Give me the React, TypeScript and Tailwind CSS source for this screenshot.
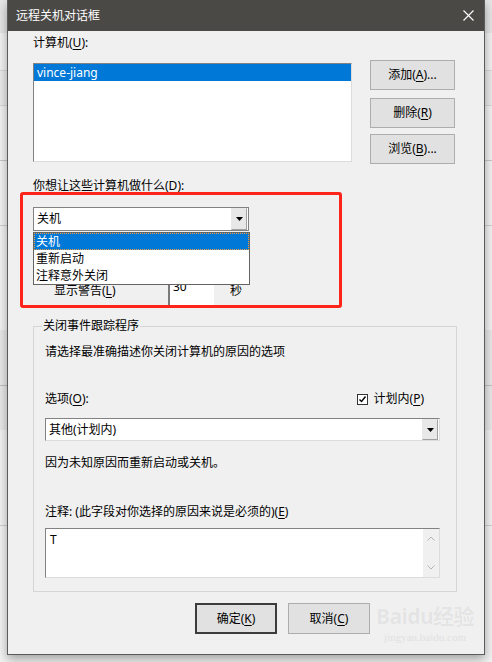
import React from "react";

const font = "font-['Noto_Sans','Noto_Sans_CJK_SC',sans-serif]";

const Btn = ({ label, def, className = "" }: { label: React.ReactNode; def?: boolean; className?: string }) => (
    <button
        className={
            "flex items-center justify-center bg-[#e1e1e1] text-[12px] text-black " +
            (def ? "border-2 border-[#3c3c3c] " : "border border-[#adadad] ") +
            className
        }
    >
        {label}
    </button>
);

const Arrow = () => (
    <div className="flex h-full w-[16px] items-center justify-center border border-[#a0a0a0] border-l-[#e8e8e8] border-t-[#e8e8e8] bg-[#e8e8e8]">
        <svg width="7" height="4" viewBox="0 0 7 4">
            <path d="M0 0H7L3.5 4Z" fill="#000" />
        </svg>
    </div>
);

const U = ({ c }: { c: string }) => <span className="underline underline-offset-2">{c}</span>;

export default function App() {
    return (
        <div className={"relative h-[662px] w-[492px] overflow-hidden bg-[#f3f3f3] " + font}>
            {/* background window bits */}
            <div className="absolute left-0 top-0 h-[33px] w-full bg-[#e6e6e6]" />
            <div className="absolute left-0 top-[70px] h-[36px] w-full border-y border-[#d8d8d8] bg-[#ebebeb]" />
            <div className="absolute left-0 top-[160px] h-px w-full bg-[#c8c8c8]" />
            <div className="absolute left-0 top-[225px] h-px w-full bg-[#d0d0d0]" />
            <div className="absolute left-0 top-[330px] h-[100px] w-full bg-[#e9e9e9]" />
            <div className="absolute left-0 top-[385px] h-px w-full bg-[#c0c0c0]" />
            <div className="absolute left-0 top-[525px] h-px w-full bg-[#d0d0d0]" />

            {/* dialog window */}
            <div className="absolute left-[7px] top-0 flex h-[655px] w-[478px] flex-col border border-t-0 border-[#5b5b5b] bg-[#f0f0f0] shadow-[0_4px_10px_rgba(0,0,0,0.35)]">
                <div className="flex h-[31px] shrink-0 items-center justify-between bg-[#4b4946] pl-[8px] pr-[10px]">
                    <span className="text-[12px] text-white">远程关机对话框</span>
                    <svg width="11" height="11" viewBox="0 0 11 11">
                        <path d="M0.5 0.5L10.5 10.5M10.5 0.5L0.5 10.5" stroke="#fff" strokeWidth="1.1" />
                    </svg>
                </div>

                <div className="flex flex-col pl-[25px] text-[12px] leading-[16px] text-black">
                    <div className="pt-[4px]">
                        计算机(<U c="U" />):
                    </div>

                    <div className="mt-[9px] flex">
                        <div className="mt-[3px] h-[99px] w-[319px] border border-[#828282] border-b-[#dcdcdc] border-r-[#dcdcdc] bg-white">
                            <div className="flex h-[17px] items-center bg-[#0078d7] pl-[3px] text-[12px] text-white">vince-jiang</div>
                        </div>
                        <div className="ml-[18px] flex flex-col">
                            <Btn label={<>添加(<U c="A" />)...</>} className="h-[30px] w-[85px]" />
                            <Btn label={<>删除(<U c="R" />)</>} className="mt-[8px] h-[30px] w-[85px]" />
                            <Btn label={<>浏览(<U c="B" />)...</>} className="mt-[6px] h-[30px] w-[85px]" />
                        </div>
                    </div>

                    <div className="mt-[14px]">
                        你想让这些计算机做什么(<U c="D" />):
                    </div>

                    <div className="relative mt-[13px] flex h-[24px] w-[216px] items-center border border-[#828282] bg-white pr-[1px]">
                        <span className="flex-1 pl-[3px]">关机</span>
                        <div className="h-[22px]">
                            <Arrow />
                        </div>
                        <div className="absolute left-[-1px] top-[24px] z-10 w-[217px] border border-[#646464] bg-white">
                            <div className="flex h-[17px] items-center border border-dotted border-[#f0a040] bg-[#0078d7] pl-[1px] text-white">关机</div>
                            <div className="flex h-[17px] items-center pl-[2px]">重新启动</div>
                            <div className="flex h-[17px] items-center pl-[2px]">注释意外关闭</div>
                        </div>
                    </div>

                    <div className="mt-[46px] flex h-[28px] items-center">
                        <span className="ml-[21px] w-[114px]">
                            显示警告(<U c="L" />)
                        </span>
                        <div className="flex h-[28px] w-[46px] items-start border-l-2 border-[#7a7a7a] bg-white pl-[3px] pt-[2px]">30</div>
                        <span className="ml-[16px]">秒</span>
                    </div>

                    <div className="relative mt-[21px] flex h-[266px] w-[424px] flex-col border border-[#d5d5d5] pl-[11px] pr-[16px] pt-[17px]">
                        <span className="absolute left-[8px] top-[-9px] bg-[#f0f0f0] px-[1px]">关闭事件跟踪程序</span>
                        <div>请选择最准确描述你关闭计算机的原因的选项</div>

                        <div className="mt-[31px] flex items-center justify-between pr-[16px]">
                            <span>
                                选项(<U c="O" />):
                            </span>
                            <span className="flex items-center gap-[6px]">
                                <span className="flex h-[11px] w-[11px] items-center justify-center border border-[#333] bg-white">
                                    <svg width="9" height="9" viewBox="0 0 9 9">
                                        <path d="M1.5 4.5L3.5 6.5L7.5 1.5" stroke="#000" strokeWidth="1.4" fill="none" />
                                    </svg>
                                </span>
                                <span>
                                    计划内(<U c="P" />)
                                </span>
                            </span>
                        </div>

                        <div className="mt-[11px] flex h-[23px] w-[395px] items-center border border-[#828282] border-b-[#dcdcdc] border-r-[#dcdcdc] bg-white pr-[1px]">
                            <span className="flex-1 pl-[3px]">其他(计划内)</span>
                            <div className="h-[21px]">
                                <Arrow />
                            </div>
                        </div>

                        <div className="mt-[14px]">因为未知原因而重新启动或关机。</div>

                        <div className="mt-[33px]">
                            注释: (此字段对你选择的原因来说是必须的)(<U c="E" />)
                        </div>

                        <div className="mt-[8px] flex h-[50px] w-[395px] border border-[#828282] border-b-[#dcdcdc] border-r-[#dcdcdc] bg-white">
                            <span className="flex-1 pl-[4px] pt-[3px]">T</span>
                            <div className="flex w-[16px] flex-col items-center justify-between bg-[#f0f0f0] py-[7px]">
                                <svg width="8" height="5" viewBox="0 0 8 5">
                                    <path d="M0.5 4.5L4 1L7.5 4.5" stroke="#b5b5b5" fill="none" />
                                </svg>
                                <svg width="8" height="5" viewBox="0 0 8 5">
                                    <path d="M0.5 0.5L4 4L7.5 0.5" stroke="#b5b5b5" fill="none" />
                                </svg>
                            </div>
                        </div>
                    </div>

                    <div className="mt-[11px] flex gap-[11px] pl-[162px]">
                        <Btn def label={<>确定(<U c="K" />)</>} className="h-[31px] w-[82px]" />
                        <Btn label={<>取消(<U c="C" />)</>} className="h-[31px] w-[82px]" />
                    </div>
                </div>
            </div>

            {/* red annotation box */}
            <div className="absolute left-[20px] top-[192px] h-[116px] w-[322px] rounded-[3px] border-[3px] border-[#ff2419]" />

            {/* watermark */}
            <div className="pointer-events-none absolute left-[376px] top-[606px] flex flex-col items-center leading-none">
                <span className="text-[21px] font-bold tracking-tight text-[#e4e4e4] [text-shadow:0_0_1px_#fff]">Baidu经验</span>
                <span className="mt-[5px] font-['Liberation_Serif',serif] text-[11px] text-[#e0e0e0]">jingyan.baidu.com</span>
            </div>
        </div>
    );
}
